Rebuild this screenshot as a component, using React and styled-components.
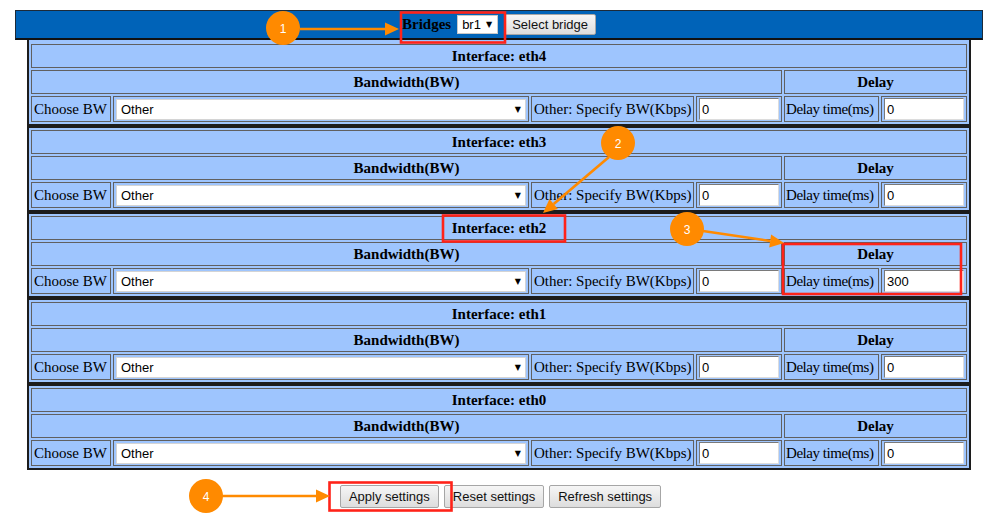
import React from 'react';
import styled, { createGlobalStyle } from 'styled-components';

const interfaces = [
    { name: 'eth4', bw: '0', delay: '0' },
    { name: 'eth3', bw: '0', delay: '0' },
    { name: 'eth2', bw: '0', delay: '300' },
    { name: 'eth1', bw: '0', delay: '0' },
    { name: 'eth0', bw: '0', delay: '0' },
];

// orange callouts drawn over the page
const callouts = [
    { n: 1, cx: 283, cy: 28, x1: 300, y1: 29, x2: 399, y2: 29 },
    { n: 2, cx: 618, cy: 143, x1: 609, y1: 157, x2: 543, y2: 213 },
    { n: 3, cx: 687, cy: 229, x1: 703, y1: 231, x2: 784, y2: 243 },
    { n: 4, cx: 206, cy: 496, x1: 222, y1: 496, x2: 330, y2: 496 },
];

const redBoxes = [
    { x: 401, y: 12.5, w: 104, h: 30 },
    { x: 443, y: 215.5, w: 122, h: 26 },
    { x: 783, y: 244, w: 178, h: 50 },
    { x: 329.5, y: 482.5, w: 122, h: 28 },
];

function Arrow({ x1, y1, x2, y2 }) {
    const a = Math.atan2(y2 - y1, x2 - x1);
    const len = 14, half = 6.5;
    const bx = x2 - len * Math.cos(a);
    const by = y2 - len * Math.sin(a);
    const px = -Math.sin(a) * half;
    const py = Math.cos(a) * half;
    return (
        <g>
            <line x1={x1} y1={y1} x2={bx} y2={by} stroke="#ff8a00" strokeWidth="2.6" />
            <polygon points={`${x2},${y2} ${bx + px},${by + py} ${bx - px},${by - py}`} fill="#ff8a00" />
        </g>
    );
}

function App() {
    return (
        <Page>
            <GlobalStyle />
            <TopBar>
                <BridgesLabel>Bridges</BridgesLabel>
                <BridgeSelect>
                    <span>br1</span>
                    <Caret>▼</Caret>
                </BridgeSelect>
                <Button>Select bridge</Button>
            </TopBar>
            <Sections>
                {interfaces.map((itf, i) => (
                    <Section key={itf.name} $first={i === 0}>
                        <Cell $span={6} $center $bold>Interface: {itf.name}</Cell>
                        <Cell $span={4} $center $bold>Bandwidth(BW)</Cell>
                        <Cell $span={2} $center $bold>Delay</Cell>
                        <Cell>Choose BW</Cell>
                        <Cell $tight>
                            <FakeSelect>
                                <span>Other</span>
                                <Caret>▼</Caret>
                            </FakeSelect>
                        </Cell>
                        <Cell>Other: Specify BW(Kbps)</Cell>
                        <Cell $tight>
                            <TextInput type="text" defaultValue={itf.bw} />
                        </Cell>
                        <Cell $narrow>Delay time(ms)</Cell>
                        <Cell $tight>
                            <TextInput type="text" defaultValue={itf.delay} />
                        </Cell>
                    </Section>
                ))}
            </Sections>
            <ButtonRow>
                <Button $tall>Apply settings</Button>
                <Button $tall>Reset settings</Button>
                <Button $tall>Refresh settings</Button>
            </ButtonRow>
            <Overlay width="1008" height="513" viewBox="0 0 1008 513">
                {redBoxes.map((b, i) => (
                    <rect key={i} x={b.x} y={b.y} width={b.w} height={b.h} fill="none" stroke="#ff2319" strokeWidth="2.6" />
                ))}
                {callouts.map((c) => (
                    <g key={c.n}>
                        <Arrow x1={c.x1} y1={c.y1} x2={c.x2} y2={c.y2} />
                        <circle cx={c.cx} cy={c.cy} r="17" fill="#ff8a00" />
                        <CalloutText x={c.cx} y={c.cy + 4.5} textAnchor="middle">{c.n}</CalloutText>
                    </g>
                ))}
            </Overlay>
        </Page>
    );
}

const GlobalStyle = createGlobalStyle`
    body {
        margin: 0;
        background: #fff;
        font-family: "Liberation Serif", "Times New Roman", serif;
    }
`;

const Page = styled.div`
    position: relative;
    width: 1008px;
    height: 513px;
    overflow: hidden;
    padding-top: 10px;
    box-sizing: border-box;
`;

const TopBar = styled.div`
    margin-left: 15px;
    width: 968px;
    height: 30px;
    box-sizing: border-box;
    background: #0063b8;
    border: 1px solid #1d2a38;
    border-bottom: 2px solid #111;
    display: flex;
    align-items: center;
    justify-content: center;
    gap: 6px;
`;

const BridgesLabel = styled.span`
    font-weight: bold;
    font-size: 15px;
    color: #000;
`;

const BridgeSelect = styled.div`
    width: 41px;
    height: 19px;
    box-sizing: border-box;
    background: #fff;
    border: 1px solid #c8c8c8;
    display: flex;
    align-items: center;
    justify-content: space-between;
    padding: 0 5px 0 4px;
    font-family: "Liberation Sans", Arial, sans-serif;
    font-size: 13px;
    color: #000;
`;

const Caret = styled.span`
    font-family: "DejaVu Sans", sans-serif;
    font-size: 8px;
    color: #000;
`;

const Button = styled.button`
    height: ${(p) => (p.$tall ? '23px' : '21px')};
    padding: 0 ${(p) => (p.$tall ? '8px' : '7px')};
    box-sizing: border-box;
    font-family: "Liberation Sans", Arial, sans-serif;
    font-size: 13px;
    color: #111;
    background: linear-gradient(#f6f6f6, #dddddd);
    border: 1px solid #a6a6a6;
    border-radius: 2px;
    cursor: pointer;
`;

const Sections = styled.div`
    margin-left: 27px;
    width: 944px;
    display: flex;
    flex-direction: column;
`;

const Section = styled.div`
    box-sizing: border-box;
    background: #9ec5fe;
    border: 2px solid #1c1c1c;
    border-top-width: ${(p) => (p.$first ? '0' : '2px')};
    padding: 2px;
    padding-top: ${(p) => (p.$first ? '4px' : '2px')};
    display: grid;
    grid-template-columns: 80px 416px 163px 86px 95px 86px;
    grid-template-rows: 24px 24px 26px;
    gap: 2px;
`;

const Cell = styled.div`
    grid-column: span ${(p) => p.$span || 1};
    box-sizing: border-box;
    border: 1px solid #606060;
    display: flex;
    align-items: center;
    justify-content: ${(p) => (p.$center ? 'center' : 'flex-start')};
    padding: ${(p) => (p.$tight ? '1px 2px' : p.$narrow ? '0 1px' : '0 2px')};
    font-size: 15px;
    letter-spacing: ${(p) => (p.$narrow ? '-0.45px' : 'normal')};
    font-weight: ${(p) => (p.$bold ? 'bold' : 'normal')};
    color: #000;
    white-space: nowrap;
    overflow: hidden;
`;

const FakeSelect = styled.div`
    width: 100%;
    height: 21px;
    box-sizing: border-box;
    background: #fff;
    border: 1px solid #d4d4d4;
    display: flex;
    align-items: center;
    justify-content: space-between;
    padding: 0 4px 0 4px;
    font-family: "Liberation Sans", Arial, sans-serif;
    font-size: 13px;
`;

const TextInput = styled.input`
    width: 100%;
    height: 22px;
    box-sizing: border-box;
    margin: 0;
    padding: 0 2px;
    background: #fff;
    border: 1px solid;
    border-color: #7a7a7a #dcdcdc #dcdcdc #7a7a7a;
    font-family: "Liberation Sans", Arial, sans-serif;
    font-size: 13px;
    color: #000;
    outline: none;
`;

const ButtonRow = styled.div`
    width: 1001px;
    margin-top: 15px;
    display: flex;
    justify-content: center;
    gap: 5px;
`;

const Overlay = styled.svg`
    position: absolute;
    top: 0;
    left: 0;
    pointer-events: none;
`;

const CalloutText = styled.text`
    font-family: "Liberation Sans", Arial, sans-serif;
    font-size: 12px;
    fill: #fff;
`;

export default App;
